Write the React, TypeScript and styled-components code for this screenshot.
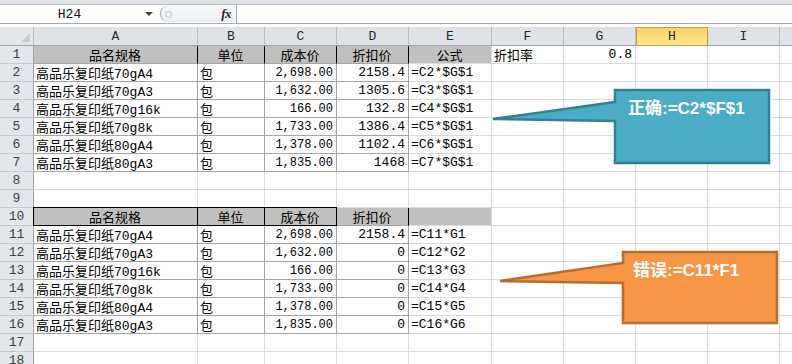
import React from "react";
import styled, { createGlobalStyle, css } from "styled-components";

const GlobalStyle = createGlobalStyle`
  html, body {
    margin: 0;
    padding: 0;
    background: #ffffff;
    overflow: hidden;
  }
  body {
    font-family: "Liberation Mono", "Noto Sans CJK SC", monospace;
    color: #000;
  }
`;

// visible columns; J only peeks in at the right edge, so its label stays hidden
const COLS = [
    { key: "A", width: 164 },
    { key: "B", width: 67 },
    { key: "C", width: 72 },
    { key: "D", width: 72 },
    { key: "E", width: 83 },
    { key: "F", width: 72 },
    { key: "G", width: 72 },
    { key: "H", width: 72 },
    { key: "I", width: 72 },
    { key: "J", width: 72, hidden: true }
];

const GRID = "#DADCDD";
const TABLE = "#A6A6A6";
const HEAD_BG = "#C0C0C0";

const products = [
    ["高品乐复印纸70gA4", "2,698.00"],
    ["高品乐复印纸70gA3", "1,632.00"],
    ["高品乐复印纸70g16k", "166.00"],
    ["高品乐复印纸70g8k", "1,733.00"],
    ["高品乐复印纸80gA4", "1,378.00"],
    ["高品乐复印纸80gA3", "1,835.00"]
];
const firstDiscount = ["2158.4", "1305.6", "132.8", "1386.4", "1102.4", "1468"];
const headers = ["品名规格", "单位", "成本价", "折扣价", "公式"];

type CellSpec = {
    text?: string;
    align?: "left" | "center" | "right";
    bg?: string;
    line?: string;
    right?: string;
    num?: boolean;
    boxed?: boolean;
};

function cellFor(row: number, col: number): CellSpec {
    const inTable = col <= 3;
    if (row === 1) {
        if (col <= 4) {
            return {
                text: headers[col],
                align: "center",
                bg: HEAD_BG,
                line: col <= 3 ? TABLE : GRID,
                right: col <= 3 ? "#000" : undefined
            };
        }
        if (col === 5) return { text: "折扣率" };
        if (col === 6) return { text: "0.8", align: "right" };
        return {};
    }
    if (row === 10) {
        if (col <= 2) return { text: headers[col], align: "center", bg: HEAD_BG, boxed: true, line: TABLE };
        if (col === 3) return { text: headers[col], align: "center", bg: HEAD_BG, line: TABLE, right: "#000" };
        if (col === 4) return { bg: HEAD_BG };
        return {};
    }
    const first = row >= 2 && row <= 7;
    const second = row >= 11 && row <= 16;
    if (!first && !second) return {};
    const i = first ? row - 2 : row - 11;
    const line = inTable ? TABLE : GRID;
    switch (col) {
        case 0: return { text: products[i][0], line };
        case 1: return { text: "包", line };
        case 2: return { text: products[i][1], align: "right", num: true, line };
        case 3: return { text: first ? firstDiscount[i] : (i === 0 ? "2158.4" : "0"), align: "right", line };
        case 4: return { text: first ? `=C${row}*$G$1` : `=C${row}*G${i + 1}` };
        default: return {};
    }
}

const Screen = styled.div`
    position: relative;
    width: 792px;
    height: 364px;
    overflow: hidden;
    background: #fff;
`;

const TopEdge = styled.div`
    height: 4px;
    background: #DEE1E5;
    border-bottom: 1px solid #B4B8BE;
`;

const BarRow = styled.div`
    height: 18px;
    display: flex;
    align-items: stretch;
    background: #fff;
    border-bottom: 1px solid #A9ADB3;
`;

const NameBox = styled.div`
    width: 157px;
    display: flex;
    align-items: center;
`;

const NameText = styled.span`
    flex: 1;
    text-align: center;
    font-size: 13px;
    padding-right: 6px;
    color: #111;
`;

const DropArrow = styled.span`
    width: 0;
    height: 0;
    margin-right: 4px;
    border-left: 4px solid transparent;
    border-right: 4px solid transparent;
    border-top: 4px solid #444;
`;

const Splitter = styled.div`
    width: 76px;
    margin-left: 3px;
    margin-top: 1px;
    margin-bottom: 1px;
    border-left: 1px solid #9AA0A8;
    border-radius: 8px 0 0 8px;
    background: linear-gradient(#F6F7F8, #ECEEF0);
    display: flex;
    align-items: center;
    box-sizing: border-box;
    padding-left: 4px;
`;

const Knob = styled.span`
    width: 5px;
    height: 5px;
    border-radius: 50%;
    border: 1px solid #B9BEC4;
    background: #F8F8F8;
`;

const Fx = styled.span`
    margin-left: auto;
    margin-right: 5px;
    font-family: "Liberation Serif", serif;
    font-style: italic;
    font-weight: bold;
    font-size: 13px;
    color: #222;
    letter-spacing: -0.5px;
`;

const FormulaInput = styled.div`
    flex: 1;
    border-left: 1px solid #A9ADB3;
`;

const Gap = styled.div`
    height: 3px;
    background: #fff;
`;

const Sheet = styled.div`
    display: grid;
    grid-template-columns: 34px ${COLS.map(c => `${c.width}px`).join(" ")};
    grid-template-rows: 19px;
    grid-auto-rows: 18px;
`;

const Corner = styled.div`
    box-sizing: border-box;
    background: #E3E6EA;
    border-right: 1px solid #B7BCC3;
    border-bottom: 1px solid #9EA4AB;
    position: relative;
    &::after {
        content: "";
        position: absolute;
        right: 3px;
        bottom: 3px;
        width: 0;
        height: 0;
        border-left: 9px solid transparent;
        border-bottom: 9px solid #C6CACF;
    }
`;

const ColHead = styled.div<{ $active?: boolean }>`
    box-sizing: border-box;
    display: flex;
    align-items: center;
    justify-content: center;
    font-size: 13px;
    color: #2A2A2A;
    background: #DFE3E8;
    border-right: 1px solid #B7BCC3;
    border-bottom: 1px solid #9EA4AB;
    ${p => p.$active && css`
        background: linear-gradient(#F9D364, #FFE88C);
        border: 1px solid #C29B52;
        color: #222;
    `}
`;

const RowHead = styled.div`
    box-sizing: border-box;
    display: flex;
    align-items: center;
    justify-content: center;
    font-size: 13px;
    color: #3E3E3E;
    background: #E3E6EA;
    border-right: 1px solid #9EA4AB;
    border-bottom: 1px solid #C6CACF;
`;

const Cell = styled.div<{ $align: string; $bg: string; $line: string; $right: string; $num?: boolean; $boxed?: boolean }>`
    box-sizing: border-box;
    position: relative;
    display: flex;
    align-items: center;
    justify-content: ${p => p.$align === "right" ? "flex-end" : p.$align === "center" ? "center" : "flex-start"};
    padding: 0 3px 0 2px;
    background: ${p => p.$bg};
    border-right: 1px solid ${p => p.$right};
    border-bottom: 1px solid ${p => p.$line};
    font-size: ${p => p.$num ? "12px" : "13px"};
    white-space: nowrap;
    ${p => p.$boxed && css`
        &::after {
            content: "";
            position: absolute;
            left: -1px;
            top: -1px;
            right: -1px;
            bottom: -1px;
            border: 1px solid #000;
            pointer-events: none;
            z-index: 1;
        }
    `}
`;

const Callouts = styled.svg`
    position: absolute;
    left: 0;
    top: 0;
    pointer-events: none;
`;

const CalloutText = styled.text`
    font-family: "Liberation Sans", "Noto Sans CJK SC", sans-serif;
    font-weight: bold;
    font-size: 17px;
    fill: #ffffff;
`;

export default function App() {
    const rows = Array.from({ length: 18 }, (_, i) => i + 1);
    return (
        <Screen>
            <GlobalStyle />
            <TopEdge />
            <BarRow>
                <NameBox>
                    <NameText>H24</NameText>
                    <DropArrow />
                </NameBox>
                <Splitter>
                    <Knob />
                    <Fx>fx</Fx>
                </Splitter>
                <FormulaInput />
            </BarRow>
            <Gap />
            <Sheet>
                <Corner />
                {COLS.map(c => (
                    <ColHead key={c.key} $active={c.key === "H"}>{c.hidden ? "" : c.key}</ColHead>
                ))}
                {rows.map(r => (
                    <React.Fragment key={r}>
                        <RowHead>{r}</RowHead>
                        {COLS.map((c, ci) => {
                            const s = cellFor(r, ci);
                            return (
                                <Cell
                                    key={c.key}
                                    $align={s.align || "left"}
                                    $bg={s.bg || "#fff"}
                                    $line={s.line || GRID}
                                    $right={s.right || s.line || GRID}
                                    $num={s.num}
                                    $boxed={s.boxed}
                                >
                                    {s.text}
                                </Cell>
                            );
                        })}
                    </React.Fragment>
                ))}
            </Sheet>
            <Callouts width="792" height="364" viewBox="0 0 792 364">
                <path
                    d="M615 90 H769 V163 H615 V121 L493 119 L615 102 Z"
                    fill="#4BACC6"
                    stroke="#357F92"
                    strokeWidth="2.5"
                />
                <CalloutText x="628" y="114">正确:=C2*$F$1</CalloutText>
                <path
                    d="M623 252 H777 V323 H623 V283 L500 281 L623 263 Z"
                    fill="#F79646"
                    stroke="#B66D31"
                    strokeWidth="2.5"
                />
                <CalloutText x="633" y="276">错误:=C11*F1</CalloutText>
            </Callouts>
        </Screen>
    );
}
